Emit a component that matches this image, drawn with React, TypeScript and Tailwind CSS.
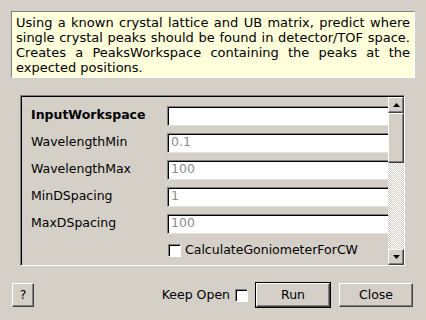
import React from "react";

const FONT = "font-['DejaVu_Sans',_'Liberation_Sans',_sans-serif]";

const fields = [
  { name: "InputWorkspace", value: "", bold: true },
  { name: "WavelengthMin", value: "0.1" },
  { name: "WavelengthMax", value: "100" },
  { name: "MinDSpacing", value: "1" },
  { name: "MaxDSpacing", value: "100" },
];

const CheckBox = () => (
  <div className="w-[13px] h-[13px] shrink-0 bg-white border border-t-[#808080] border-l-[#808080] border-b-white border-r-white shadow-[inset_1px_1px_0_#000]" />
);

const RaisedButton: React.FC<{ label: string; className?: string }> = ({
  label,
  className = "",
}) => (
  <div
    className={`flex items-center justify-center bg-[#d4d0c8] border border-t-white border-l-white border-b-[#404040] border-r-[#404040] shadow-[inset_-1px_-1px_0_#808080] text-[12.5px] text-black ${className}`}
  >
    {label}
  </div>
);

const ArrowButton: React.FC<{ up?: boolean }> = ({ up }) => (
  <div className="w-[16px] h-[16px] shrink-0 flex items-center justify-center bg-[#d4d0c8] border border-t-white border-l-white border-b-[#404040] border-r-[#404040] shadow-[inset_-1px_-1px_0_#808080]">
    <svg width="7" height="4" viewBox="0 0 7 4">
      {up ? (
        <polygon points="3.5,0 7,4 0,4" fill="#000" />
      ) : (
        <polygon points="0,0 7,0 3.5,4" fill="#000" />
      )}
    </svg>
  </div>
);

export default function App() {
  return (
    <div
      className={`w-[426px] h-[320px] bg-[#d4d0c8] flex flex-col overflow-hidden ${FONT} text-black`}
    >
      {/* description */}
      <div className="mx-[11px] mt-[11px] h-[67px] bg-[#ffffdc] border border-t-[#808080] border-l-[#808080] border-b-white border-r-white px-[4px] pt-[3px] text-[13px] leading-[15px] text-justify">
        Using a known crystal lattice and UB matrix, predict where single
        crystal peaks should be found in detector/TOF space. Creates a
        PeaksWorkspace containing the peaks at the expected positions.
      </div>

      {/* property scroll area */}
      <div className="mt-[17px] ml-[20px] w-[385px] h-[171px] flex border border-t-[#808080] border-l-[#808080] border-b-white border-r-white shadow-[inset_1px_1px_0_#000]">
        <div className="flex-1 min-w-0 overflow-hidden pt-[6px] pl-[1px]">
          {fields.map((f) => (
            <div key={f.name} className="h-[27px] flex items-center">
              <div
                className={`w-[145px] shrink-0 pl-[9px] text-[12.5px] ${f.bold ? "font-bold" : ""}`}
              >
                {f.name}
              </div>
              <div className="w-[240px] h-[20px] shrink-0 bg-white border border-t-[#808080] border-l-[#808080] border-b-[#e6e3de] border-r-[#e6e3de] shadow-[inset_1px_1px_0_#000] pl-[3px] flex items-center text-[12.5px] text-[#8c8c8c]">
                {f.value}
              </div>
            </div>
          ))}
          <div className="h-[27px] flex items-center pl-[146px] gap-[4px]">
            <CheckBox />
            <span className="text-[12.5px] whitespace-nowrap">CalculateGoniometerForCW</span>
          </div>
        </div>
        <div className="w-[16px] shrink-0 mt-[1px] flex flex-col">
          <ArrowButton up />
          <div className="h-[50px] shrink-0 bg-[#d4d0c8] border border-t-white border-l-white border-b-[#404040] border-r-[#404040] shadow-[inset_-1px_-1px_0_#808080]" />
          <div className="flex-1 bg-[repeating-conic-gradient(#ffffff_0_25%,#d4d0c8_0_50%)] bg-[length:2px_2px]" />
          <ArrowButton />
        </div>
      </div>

      {/* bottom buttons */}
      <div className="mt-[16px] h-[26px] flex items-center pl-[12px] pr-[13px]">
        <RaisedButton label="?" className="w-[22px] h-[24px]" />
        <div className="flex-1" />
        <span className="text-[12.5px] mr-[5px]">Keep Open</span>
        <CheckBox />
        <div className="ml-[7px] w-[76px] h-[26px] border border-black">
          <RaisedButton label="Run" className="w-full h-full" />
        </div>
        <RaisedButton label="Close" className="ml-[8px] w-[74px] h-[24px]" />
      </div>
    </div>
  );
}
